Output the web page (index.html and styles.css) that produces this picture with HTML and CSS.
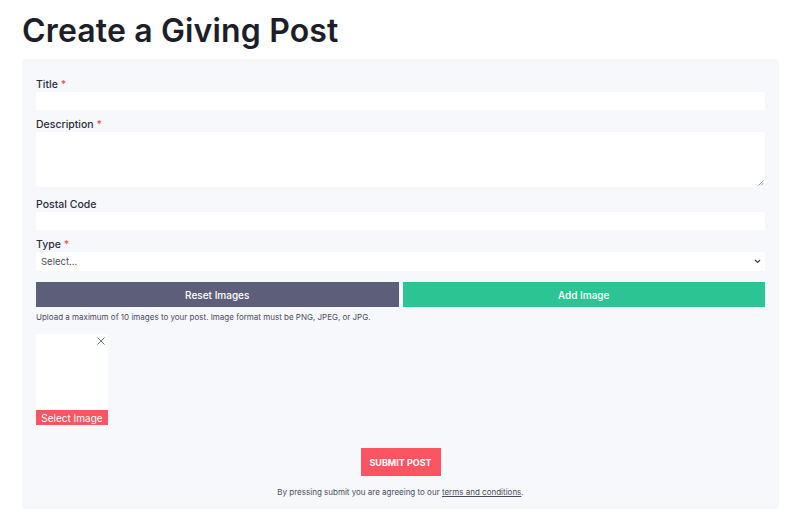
FILE: index.html
```html
<!DOCTYPE html>
<html lang="en">
<head>
<meta charset="utf-8">
<title>Create a Giving Post</title>
<link rel="stylesheet" href="styles.css">
</head>
<body>
<h1 class="page-title">Create a Giving Post</h1>
<form class="card">
  <div class="field">
    <label class="label">Title <span class="req">*</span></label>
    <input class="input" type="text">
  </div>
  <div class="field field-tall">
    <label class="label">Description <span class="req">*</span></label>
    <div class="textarea-wrap">
      <textarea class="textarea"></textarea>
      <svg class="grip" width="7" height="7" viewBox="0 0 7 7"><path d="M6.5 1.5 L1.5 6.5 M6.5 4 L4 6.5" stroke="#8a8d99" stroke-width="0.9" fill="none"/></svg>
    </div>
  </div>
  <div class="field">
    <label class="label">Postal Code</label>
    <input class="input" type="text">
  </div>
  <div class="field">
    <label class="label">Type <span class="req">*</span></label>
    <div class="select">
      <span>Select...</span>
      <svg width="7" height="5" viewBox="0 0 7 5"><path d="M1 1 L3.5 3.5 L6 1" stroke="#3a3c4c" stroke-width="1.2" fill="none"/></svg>
    </div>
  </div>
  <div class="btn-row">
    <button type="button" class="btn btn-reset">Reset Images</button>
    <button type="button" class="btn btn-add">Add Image</button>
  </div>
  <p class="help">Upload a maximum of 10 images to your post. Image format must be PNG, JPEG, or JPG.</p>
  <div class="thumb">
    <div class="thumb-img">
      <svg class="close" width="8" height="8" viewBox="0 0 8 8"><path d="M0.5 0.5 L7.5 7.5 M7.5 0.5 L0.5 7.5" stroke="#6b6e7c" stroke-width="1" fill="none"/></svg>
    </div>
    <button type="button" class="select-img">Select Image</button>
  </div>
  <div class="submit-row">
    <button type="button" class="submit">SUBMIT POST</button>
  </div>
  <p class="terms">By pressing submit you are agreeing to our <a href="#">terms and conditions</a>.</p>
</form>
</body>
</html>
```

FILE: styles.css
```css
* { box-sizing: border-box; }
html, body { background: #ffffff; }
body {
  margin: 0;
  padding: 10px 21px 0 22px;
  font-family: "Inter", "Open Sans", sans-serif;
  color: #2a2b38;
}
.page-title {
  margin: 0 0 8px 0;
  font-size: 32px;
  line-height: 41px;
  font-weight: 600;
  color: #1d1e2a;
  letter-spacing: 0.15px;
}
.card {
  background: #f7f8fc;
  border-radius: 3px;
  padding: 19px 14px 11px 14px;
  display: flex;
  flex-direction: column;
}
.field { display: flex; flex-direction: column; margin-bottom: 8px; }
.field-tall { margin-bottom: 11px; }
.label {
  font-size: 10.5px;
  line-height: 14px;
  font-weight: 500;
  color: #2c2d3a;
}
.req { color: #f0505c; }
.input {
  height: 18px;
  border: none;
  background: #ffffff;
  padding: 0 6px;
  outline: none;
}
.textarea-wrap { position: relative; height: 55px; }
.textarea {
  width: 100%;
  height: 55px;
  border: none;
  background: #fff;
  resize: none;
  display: block;
  outline: none;
}
.grip { position: absolute; right: 1px; bottom: 1px; }
.select {
  height: 19px;
  background: #fff;
  display: flex;
  align-items: center;
  justify-content: space-between;
  padding: 0 4px 0 5px;
  font-size: 9.5px;
  color: #4c4e5c;
}
.btn-row {
  display: flex;
  gap: 4px;
  margin-top: 3px;
}
.btn {
  flex: 1;
  height: 25px;
  border: none;
  font-family: inherit;
  font-size: 10px;
  font-weight: 500;
  color: #fff;
}
.btn-reset { background: #5d5f7a; }
.btn-add { background: #2cc493; }
.help {
  margin: 4px 0 11px 0;
  font-size: 8px;
  line-height: 12px;
  color: #4a4c5c;
}
.thumb { width: 72px; display: flex; flex-direction: column; }
.thumb-img { position: relative; height: 76px; background: #fff; }
.close { position: absolute; right: 3px; top: 3px; }
.select-img {
  height: 15px;
  border: none;
  background: #fa5561;
  color: #fff;
  font-family: inherit;
  font-size: 10px;
  padding: 0;
}
.submit-row { display: flex; justify-content: center; margin-top: 23px; }
.submit {
  width: 80px;
  height: 28px;
  border: none;
  background: #fa5561;
  color: #fff;
  font-family: inherit;
  font-size: 9px;
  font-weight: 700;
  padding: 0;
}
.terms {
  margin: 10px 0 0 0;
  text-align: center;
  font-size: 8px;
  line-height: 12px;
  color: #4a4c5c;
}
.terms a { color: #4a4c5c; }
```
